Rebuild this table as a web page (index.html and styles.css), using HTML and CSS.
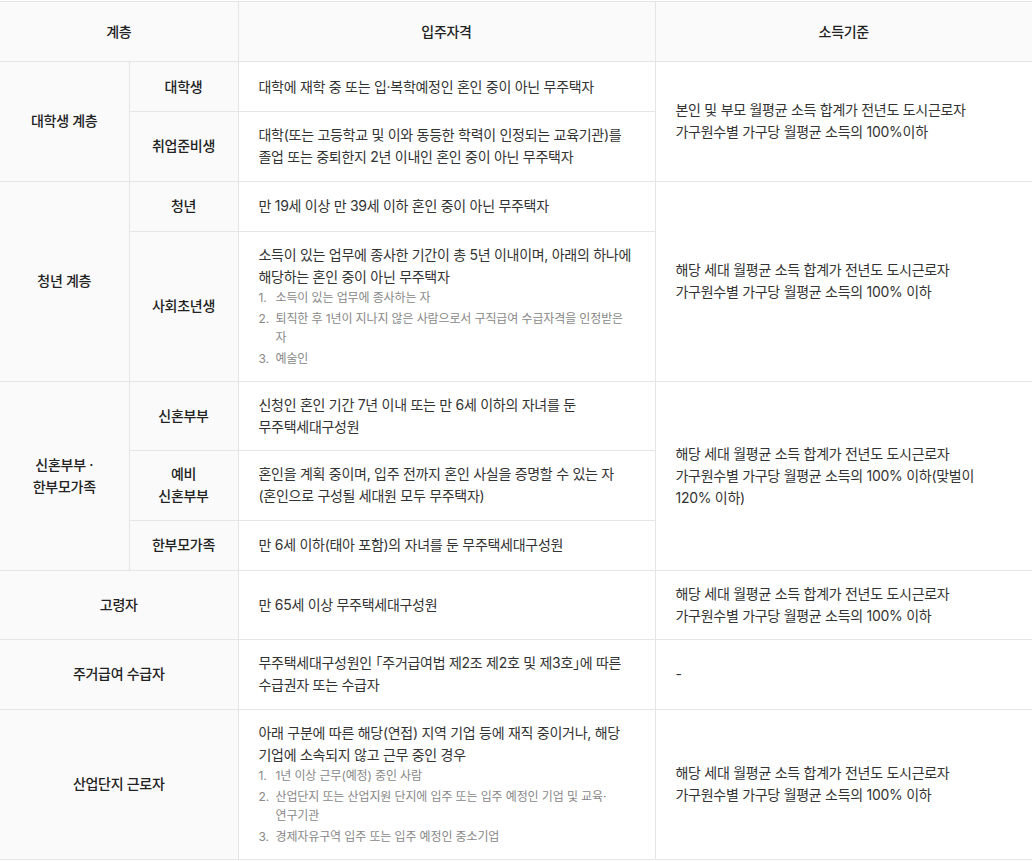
FILE: index.html
```html
<!DOCTYPE html>
<html lang="ko">
<head>
<meta charset="utf-8">
<title>입주자격 및 소득기준</title>
<link rel="stylesheet" href="styles.css">
</head>
<body>
<table class="tbl">
  <colgroup>
    <col class="c1"><col class="c2"><col class="c3"><col class="c4">
  </colgroup>
  <thead>
    <tr class="head">
      <th colspan="2">계층</th>
      <th>입주자격</th>
      <th>소득기준</th>
    </tr>
  </thead>
  <tbody>
    <tr>
      <th rowspan="2">대학생 계층</th>
      <th>대학생</th>
      <td>대학에 재학 중 또는 입·복학예정인 혼인 중이 아닌 무주택자</td>
      <td rowspan="2" class="inc">본인 및 부모 월평균 소득 합계가 전년도 도시근로자<br>가구원수별 가구당 월평균 소득의 100%이하</td>
    </tr>
    <tr>
      <th>취업준비생</th>
      <td>대학(또는 고등학교 및 이와 동등한 학력이 인정되는 교육기관)를 졸업 또는 중퇴한지 2년 이내인 혼인 중이 아닌 무주택자</td>
    </tr>
    <tr>
      <th rowspan="2">청년 계층</th>
      <th>청년</th>
      <td>만 19세 이상 만 39세 이하 혼인 중이 아닌 무주택자</td>
      <td rowspan="2" class="inc">해당 세대 월평균 소득 합계가 전년도 도시근로자<br>가구원수별 가구당 월평균 소득의 100% 이하</td>
    </tr>
    <tr>
      <th>사회초년생</th>
      <td>소득이 있는 업무에 종사한 기간이 총 5년 이내이며, 아래의 하나에 해당하는 혼인 중이 아닌 무주택자
        <ol class="sub">
          <li>소득이 있는 업무에 종사하는 자</li>
          <li>퇴직한 후 1년이 지나지 않은 사람으로서 구직급여 수급자격을 인정받은 자</li>
          <li>예술인</li>
        </ol>
      </td>
    </tr>
    <tr>
      <th rowspan="3">신혼부부 ·<br>한부모가족</th>
      <th>신혼부부</th>
      <td>신청인 혼인 기간 7년 이내 또는 만 6세 이하의 자녀를 둔 무주택세대구성원</td>
      <td rowspan="3" class="inc">해당 세대 월평균 소득 합계가 전년도 도시근로자<br>가구원수별 가구당 월평균 소득의 100% 이하(맞벌이 120% 이하)</td>
    </tr>
    <tr>
      <th>예비<br>신혼부부</th>
      <td>혼인을 계획 중이며, 입주 전까지 혼인 사실을 증명할 수 있는 자 (혼인으로 구성될 세대원 모두 무주택자)</td>
    </tr>
    <tr>
      <th>한부모가족</th>
      <td>만 6세 이하(태아 포함)의 자녀를 둔 무주택세대구성원</td>
    </tr>
    <tr>
      <th colspan="2">고령자</th>
      <td>만 65세 이상 무주택세대구성원</td>
      <td class="inc">해당 세대 월평균 소득 합계가 전년도 도시근로자<br>가구원수별 가구당 월평균 소득의 100% 이하</td>
    </tr>
    <tr>
      <th colspan="2">주거급여 수급자</th>
      <td class="half">무주택세대구성원인 「주거급여법 제2조 제2호 및 제3호」에 따른 수급권자 또는 수급자</td>
      <td class="inc">-</td>
    </tr>
    <tr>
      <th colspan="2">산업단지 근로자</th>
      <td>아래 구분에 따른 해당(연접) 지역 기업 등에 재직 중이거나, 해당 기업에 소속되지 않고 근무 중인 경우
        <ol class="sub">
          <li>1년 이상 근무(예정) 중인 사람</li>
          <li>산업단지 또는 산업지원 단지에 입주 또는 입주 예정인 기업 및 교육·연구기관</li>
          <li>경제자유구역 입주 또는 입주 예정인 중소기업</li>
        </ol>
      </td>
      <td class="inc">해당 세대 월평균 소득 합계가 전년도 도시근로자<br>가구원수별 가구당 월평균 소득의 100% 이하</td>
    </tr>
  </tbody>
</table>
</body>
</html>
```

FILE: styles.css
```css
html, body {
  margin: 0;
  padding: 0;
  background: #ffffff;
}

body {
  padding-top: 1px;
  font-family: "Inter", "Noto Sans CJK KR", sans-serif;
  font-size: 14px;
  color: #333333;
  letter-spacing: -0.02em;
  word-break: keep-all;
}

.tbl {
  width: 100%;
  border-collapse: collapse;
  table-layout: fixed;
  border-left: hidden;
  border-right: hidden;
}

.c1 { width: 129px; }
.c2 { width: 109px; }
.c3 { width: 417px; }
.c4 { width: 377px; }

.tbl th,
.tbl td {
  border: 1px solid #e5e5e5;
  padding: 12.25px 20px;
  line-height: 22px;
  vertical-align: middle;
}

.tbl tbody tr {
  height: 50px;
}

.tbl .head {
  height: 60px;
}

.tbl th {
  background: #fafafa;
  font-weight: 500;
  color: #222222;
  text-align: center;
}

.tbl td {
  text-align: left;
  color: #333333;
}

.tbl td.half {
  font-feature-settings: "halt";
}

.sub {
  list-style: none;
  margin: 0;
  padding: 0 0 0 17px;
  counter-reset: item;
  font-size: 12px;
  line-height: 19px;
  letter-spacing: -0.01em;
  color: #888888;
}

.sub li {
  counter-increment: item;
}

.sub li + li {
  margin-top: 2.25px;
}

.sub li::before {
  content: counter(item) ".";
  display: inline-block;
  width: 17px;
  margin-left: -17px;
}
```
